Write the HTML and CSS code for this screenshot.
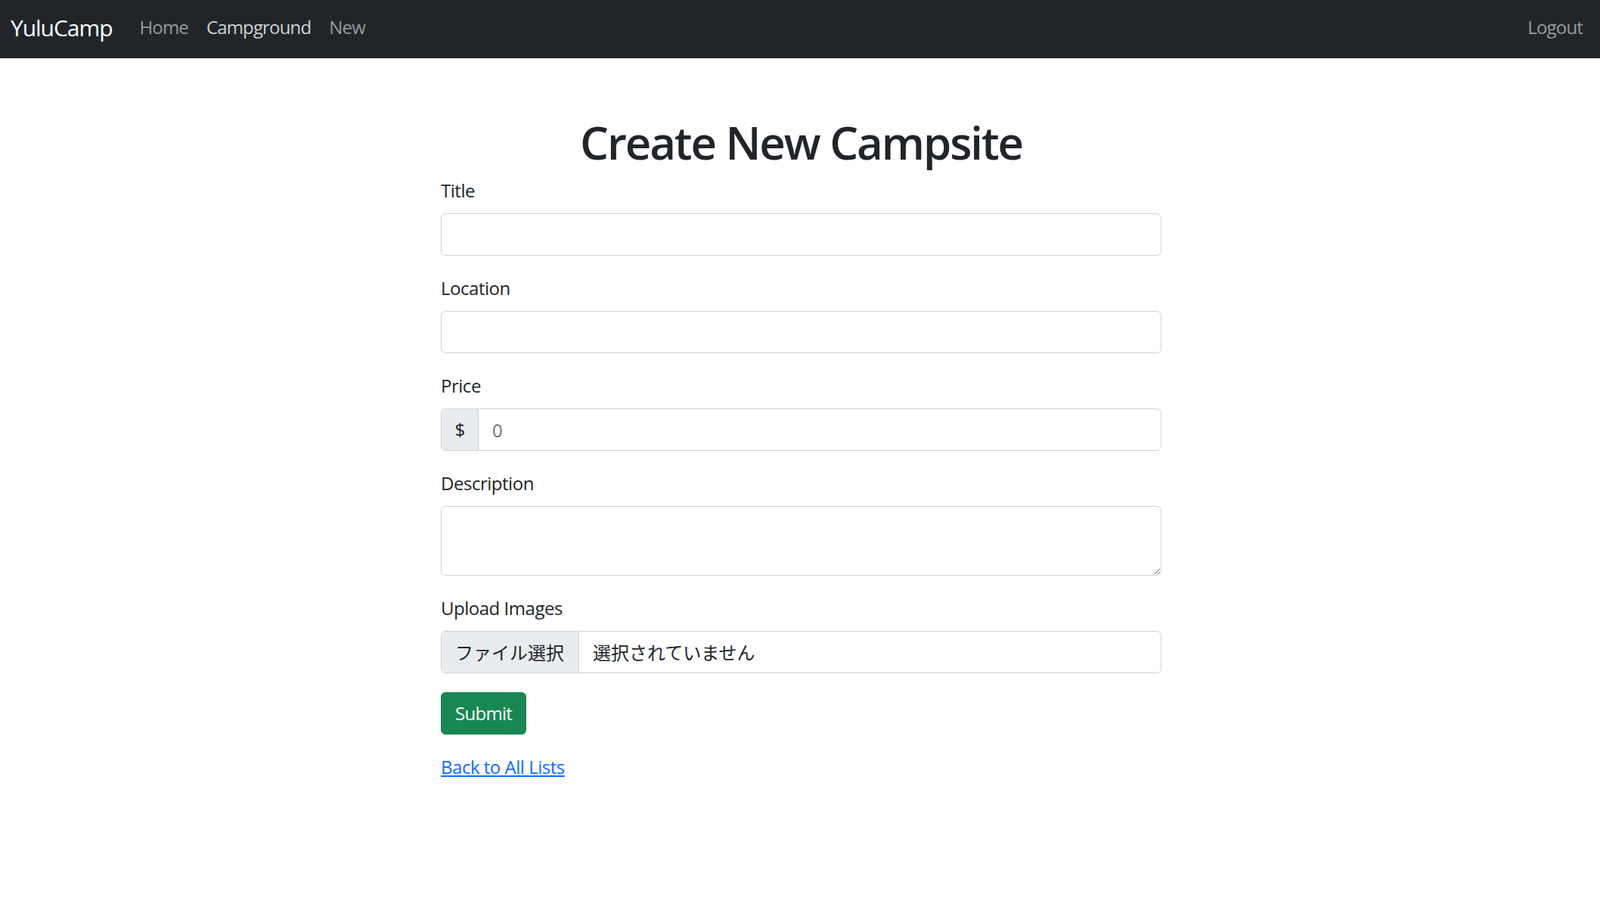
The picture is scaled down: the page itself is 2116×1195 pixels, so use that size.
FILE: index.html
```html
<!DOCTYPE html>
<html lang="ja">
<head>
<meta charset="utf-8">
<title>YuluCamp</title>
<link rel="stylesheet" href="styles.css">
</head>
<body>
<nav class="navbar">
  <a class="brand" href="#">YuluCamp</a>
  <ul class="nav-list">
    <li><a class="nav-link" href="#">Home</a></li>
    <li><a class="nav-link active" href="#">Campground</a></li>
    <li><a class="nav-link" href="#">New</a></li>
  </ul>
  <ul class="nav-list nav-right">
    <li><a class="nav-link" href="#">Logout</a></li>
  </ul>
</nav>
<main class="page">
  <h1 class="heading">Create New Campsite</h1>
  <form class="form">
    <div class="field">
      <label class="label" for="title">Title</label>
      <input class="control" id="title" type="text">
    </div>
    <div class="field">
      <label class="label" for="location">Location</label>
      <input class="control" id="location" type="text">
    </div>
    <div class="field">
      <label class="label" for="price">Price</label>
      <div class="input-group">
        <span class="addon">$</span>
        <input class="control grouped" id="price" type="text" placeholder="0">
      </div>
    </div>
    <div class="field">
      <label class="label" for="description">Description</label>
      <textarea class="control textarea" id="description"></textarea>
    </div>
    <div class="field">
      <label class="label" for="image">Upload Images</label>
      <div class="file-control">
        <span class="file-btn">ファイル選択</span>
        <span class="file-name">選択されていません</span>
      </div>
    </div>
    <div class="field">
      <button class="btn-submit" type="button">Submit</button>
    </div>
  </form>
  <a class="back-link" href="#">Back to All Lists</a>
</main>
</body>
</html>
```
FILE: styles.css
```css
* { box-sizing: border-box; }
body {
  margin: 0;
  font-family: "Open Sans", "Noto Sans CJK JP", sans-serif;
  font-size: 24px;
  line-height: 1.5;
  letter-spacing: -0.02em;
  color: #212529;
  background: #fff;
}
.navbar {
  display: flex;
  align-items: center;
  height: 77px;
  background: #212529;
  padding: 0 11px 5px 14px;
}
.brand {
  font-size: 30px;
  line-height: 45px;
  letter-spacing: -0.035em;
  color: #fff;
  text-decoration: none;
  margin-right: 24px;
}
.nav-list {
  display: flex;
  list-style: none;
  margin: 0;
  padding: 0;
}
.nav-right { margin-left: auto; }
.nav-link {
  display: block;
  padding: 0 12px;
  line-height: 36px;
  letter-spacing: -0.035em;
  color: rgba(255, 255, 255, 0.55);
  text-decoration: none;
}
.nav-link.active { color: rgba(255, 255, 255, 0.8); }
.page {
  width: 953px;
  margin: 73px 0 0 calc(50% - 475px);
}
.heading {
  margin: 0 0 10px;
  padding-top: 2px;
  font-size: 60px;
  line-height: 72px;
  font-weight: 600;
  letter-spacing: -0.035em;
  text-align: center;
}
.form { margin: 0; }
.field { margin-bottom: 25px; }
.label {
  display: block;
  margin-bottom: 12px;
  line-height: 36px;
}
.control {
  display: block;
  width: 100%;
  height: 56px;
  padding: 9px 18px;
  font: inherit;
  font-size: 24px;
  line-height: 36px;
  color: #212529;
  background: #fff;
  border: 1px solid #ced4da;
  border-radius: 6px;
  outline: none;
}
.control::placeholder { color: #6c757d; }
.textarea {
  height: 92px;
  resize: vertical;
}
.input-group { display: flex; }
.addon {
  display: flex;
  align-items: center;
  justify-content: center;
  width: 50px;
  background: #e9ecef;
  border: 1px solid #ced4da;
  border-radius: 6px 0 0 6px;
  line-height: 36px;
}
.grouped {
  flex: 1;
  margin-left: -1px;
  border-radius: 0 6px 6px 0;
}
.file-control {
  display: flex;
  align-items: stretch;
  height: 56px;
  border: 1px solid #ced4da;
  border-radius: 6px;
  overflow: hidden;
  font-family: "Noto Sans CJK JP", sans-serif;
  letter-spacing: 0;
}
.file-btn {
  display: flex;
  align-items: center;
  padding: 0 19px 0 18px;
  background: #e9ecef;
  border-right: 1px solid #ced4da;
}
.file-name {
  display: flex;
  align-items: center;
  padding-left: 18px;
}
.btn-submit {
  font: inherit;
  font-size: 24px;
  line-height: 36px;
  letter-spacing: -0.03em;
  padding: 9px 18px;
  color: #fff;
  background: #198754;
  border: 1px solid #198754;
  border-radius: 6px;
}
.back-link {
  color: #0d6efd;
  text-decoration: underline;
  line-height: 36px;
}
```
